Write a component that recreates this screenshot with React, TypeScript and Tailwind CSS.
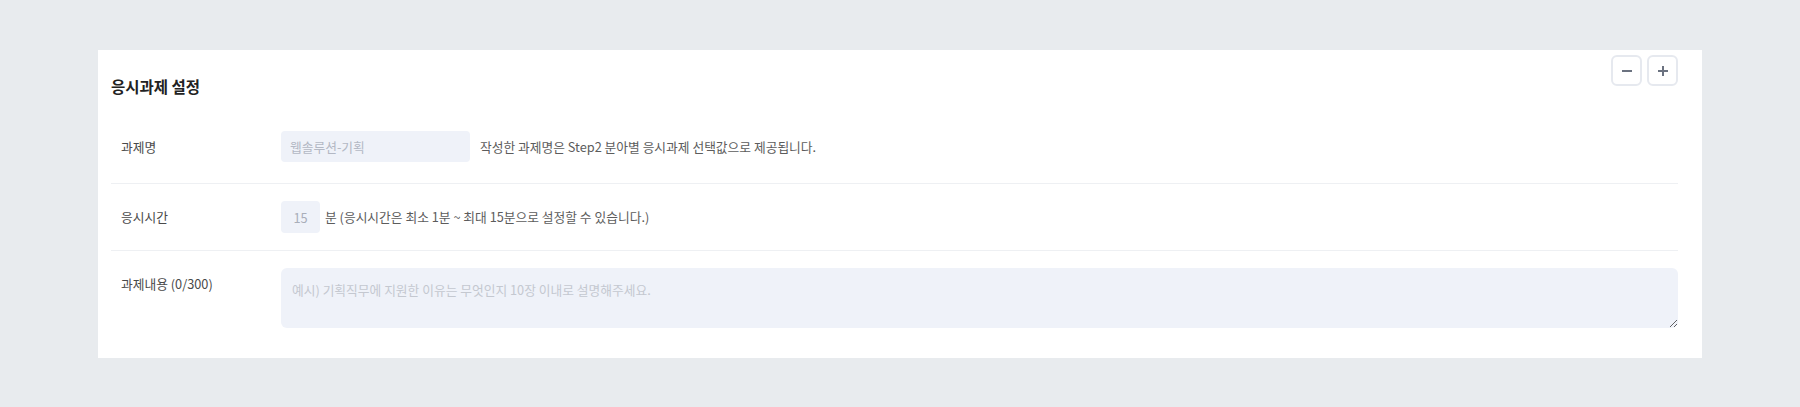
import React from 'react'

const font = { fontFamily: '"Noto Sans CJK KR", "Noto Sans", sans-serif' }

function IconButton({ kind }: { kind: 'minus' | 'plus' }) {
  return (
    <button
      type="button"
      className="flex h-[31px] w-[31px] items-center justify-center rounded-md border-2 border-[#e6e9ef] bg-white"
    >
      <svg width="12" height="12" viewBox="0 0 12 12" fill="none" stroke="#6b7280" strokeWidth="2">
        <line x1="1" y1="6" x2="11" y2="6" />
        {kind === 'plus' && <line x1="6" y1="1" x2="6" y2="11" />}
      </svg>
    </button>
  )
}

function Row({
  label,
  children,
  last,
  top,
  className = 'py-[17px]',
}: {
  label: string
  children: React.ReactNode
  last?: boolean
  top?: boolean
  className?: string
}) {
  return (
    <div
      className={`flex ${top ? 'items-start' : 'items-center'} ${className} ${last ? '' : 'border-b border-[#eef0f3]'}`}
    >
      <div className={`w-[170px] shrink-0 pl-[10px] text-[12.75px] text-[#4a4a4a] ${top ? 'mt-[6px]' : ''}`}>
        {label}
      </div>
      <div className="flex flex-1 items-center">{children}</div>
    </div>
  )
}

export default function App() {
  return (
    <div className="min-h-[407px] bg-[#e8ebee] px-[98px] pt-[50px]" style={font}>
      <div className="bg-white pb-[13px] pl-[13px] pr-[24px] pt-[5px]">
        <div className="flex items-start justify-between">
          <h2 className="mt-[19px] text-[15.5px] font-bold leading-[24px] text-[#222]">응시과제 설정</h2>
          <div className="flex gap-[5px]">
            <IconButton kind="minus" />
            <IconButton kind="plus" />
          </div>
        </div>

        <div className="mt-[16px]">
          <Row label="과제명" className="pb-[21px] pt-[17px]">
            <input
              readOnly
              placeholder="웹솔루션-기획"
              className="h-[31px] w-[189px] rounded bg-[#eff2f9] pl-[9px] text-[12.75px] text-[#333] outline-none placeholder:text-[#b3b8c4]"
            />
            <span className="ml-[10px] text-[12.75px] text-[#5c5c5c]">
              작성한 과제명은 Step2 분아별 응시과제 선택값으로 제공됩니다.
            </span>
          </Row>
          <Row label="응시시간">
            <input
              readOnly
              value="15"
              className="h-[32px] w-[39px] rounded bg-[#eff2f9] text-center text-[12.75px] text-[#a9aeb9] outline-none"
            />
            <span className="ml-[5px] text-[12.75px] text-[#5c5c5c]">
              분 (응시시간은 최소 1분 ~ 최대 15분으로 설정할 수 있습니다.)
            </span>
          </Row>
          <Row label="과제내용 (0/300)" last top>
            <textarea
              placeholder="예시) 기획직무에 지원한 이유는 무엇인지 10장 이내로 설명해주세요."
              className="h-[60px] w-full rounded-md bg-[#eff2f9] px-[11px] pt-[12px] text-[12.75px] text-[#333] outline-none placeholder:text-[#c4c8d0]"
            />
          </Row>
        </div>
      </div>
    </div>
  )
}
